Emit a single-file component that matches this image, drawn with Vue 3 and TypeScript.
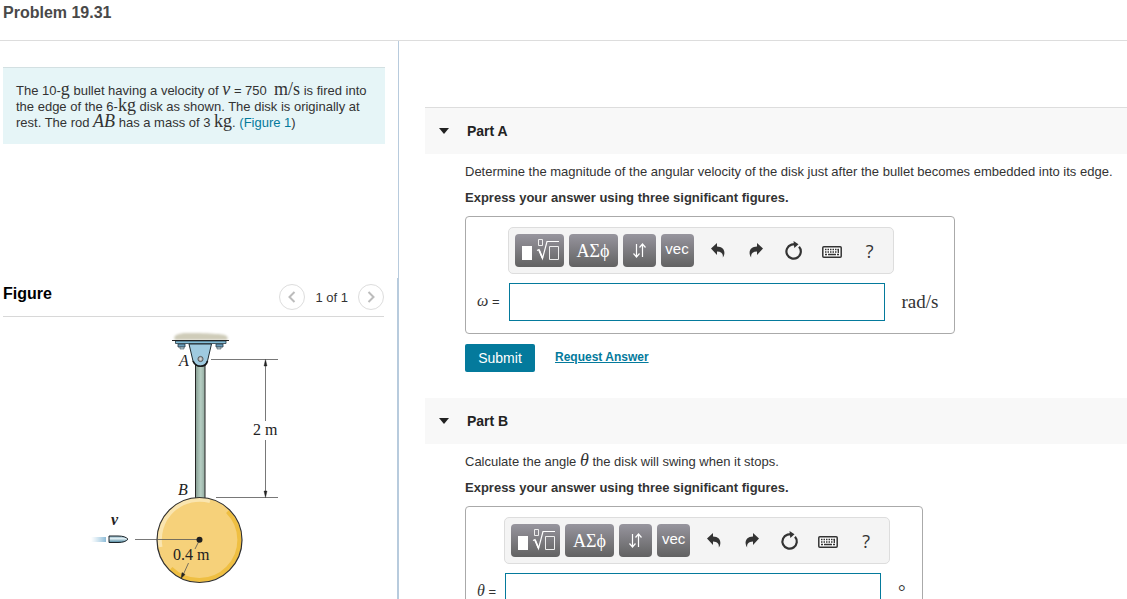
<script setup lang="ts">
import { ref } from 'vue'

interface Part {
  id: string
  title: string
  symbol: string
  unit: string
}

const parts: Part[] = [
  { id: 'a', title: 'Part A', symbol: 'ω', unit: 'rad/s' },
  { id: 'b', title: 'Part B', symbol: 'θ', unit: '°' },
]

const answers = ref<Record<string, string>>({ a: '', b: '' })
</script>

<template>
  <div class="page">
    <header class="top">
      <h1>Problem 19.31</h1>
    </header>
    <div class="columns">
      <aside class="side">
        <p class="statement">
          The 10-<span class="math">g</span> bullet having a velocity of <i class="math">v</i> = 750 &nbsp;<span class="math">m/s</span> is fired into
          the edge of the 6-<span class="math">kg</span> disk as shown. The disk is originally at
          rest. The rod <i class="math">AB</i> has a mass of 3 <span class="math">kg</span>. <a href="#figure">(Figure 1<span class="paren">)</span></a>
        </p>
        <section id="figure" class="figure">
          <div class="figure-head">
            <h2>Figure</h2>
            <nav class="pager" aria-label="Figures">
              <button type="button" aria-label="Previous figure">
                <svg width="10" height="14" viewBox="0 0 10 14"><path d="M7.5 2 2.5 7l5 5" /></svg>
              </button>
              <span>1 of 1</span>
              <button type="button" aria-label="Next figure">
                <svg width="10" height="14" viewBox="0 0 10 14"><path d="m2.5 2 5 5-5 5" /></svg>
              </button>
            </nav>
          </div>
          <svg class="drawing" width="381" height="282" viewBox="3 317 381 282" role="img" aria-label="Disk hanging from rod AB, struck by a bullet">
            <defs>
              <linearGradient id="rod" x1="0" x2="1" y1="0" y2="0">
                <stop offset="0" stop-color="#84998f" />
                <stop offset=".3" stop-color="#a1b9ae" />
                <stop offset=".55" stop-color="#b5cdc2" />
                <stop offset="1" stop-color="#91a99e" />
              </linearGradient>
              <linearGradient id="trail" x1="0" x2="1" y1="0" y2="0">
                <stop offset="0" stop-color="#a9cfe4" stop-opacity="0" />
                <stop offset="1" stop-color="#8dbcd8" />
              </linearGradient>
              <linearGradient id="shell" x1="0" x2="0" y1="0" y2="1">
                <stop offset="0" stop-color="#7fa9bb" />
                <stop offset=".4" stop-color="#e3f1f6" />
                <stop offset="1" stop-color="#427f99" />
              </linearGradient>
              <radialGradient id="pin">
                <stop offset="0" stop-color="#e2e2e2" />
                <stop offset="1" stop-color="#8f9396" />
              </radialGradient>
              <filter id="soft" x="-10%" y="-40%" width="120%" height="180%">
                <feGaussianBlur stdDeviation="1" />
              </filter>
            </defs>
            <path d="M175 340c-3-5 4-7 12-7 12 0 21 0 29 1 8 0 14 2 11 6z" fill="#cfccb9" filter="url(#soft)" />
            <path d="M178 344h7v3h-7zM216 344h7v3h-7z" fill="#6b9fbd" stroke="#263944" stroke-width=".8" />
            <path d="M180 347h4v2h-4zM217 347h4v2h-4z" fill="#b2cad5" stroke="#47545b" stroke-width=".6" />
            <path d="M175.500 341h50.500v2.500h-50.500z" fill="#83bdd8" stroke="#243943" stroke-width=".8" />
            <path d="M172 340.500h57" class="ink" />
            <path d="M195.500 362h9.500v137h-9.500z" fill="url(#rod)" stroke="#252525" />
            <path d="M189 344h22.500l-4 17c-2 7-12 7-14.500 0z" fill="#9fcae0" stroke="#202b30" />
            <path d="M193 361c3 7 12.500 7 14.500 0" fill="none" stroke="#17191b" stroke-width="1.700" />
            <circle cx="200.500" cy="359" r="2.600" fill="url(#pin)" stroke="#4c4c4c" stroke-width=".8" />
            <circle cx="199.500" cy="540" r="42.500" fill="#f6d17a" />
            <path d="M160.500 547A40 40 0 0 1 210 501" fill="none" stroke="#fae5af" stroke-width="4" />
            <path d="M227.500 511.500A40 40 0 0 1 171 568.500" fill="none" stroke="#efbf42" stroke-width="4" />
            <circle cx="199.500" cy="540" r="42.500" fill="none" stroke="#303030" stroke-width="1.200" />
            <path d="M135 539.500h64M211 359.500h67M216 497.500h62M265.500 365v56M265.500 440v52" class="thin" />
            <path d="m199 541-4 8M188.500 563l-5 11" class="thin" />
            <path d="M265.500 359.500 267 366h-3zM265.500 497.500 267 491h-3zM181 578.500l1-6 3 2z" fill="#222" stroke="#222" stroke-width=".4" />
            <circle cx="199.500" cy="539.800" r="3" fill="#1f1f1f" />
            <path d="M91 537h15v5H91z" fill="url(#trail)" />
            <path d="M109 536h9c5 0 8 1 10 3.200-2 2.300-5 3.300-10 3.300h-9z" fill="url(#shell)" stroke="#1c252a" />
            <text x="179" y="366" class="it">A</text>
            <text x="178" y="495" class="it">B</text>
            <text x="111" y="525" class="it bold">v</text>
            <text x="253" y="435">2 m</text>
            <text x="173" y="560">0.4 m</text>
          </svg>
        </section>
      </aside>

      <main class="main">
        <section v-for="part in parts" :key="part.id" class="part" :class="'part-' + part.id">
          <h2 class="part-head">
            <button type="button" aria-expanded="true"><span class="caret"></span>{{ part.title }}</button>
          </h2>
          <div class="part-body">
            <p v-if="part.id === 'a'">Determine the magnitude of the angular velocity of the disk just after the bullet becomes embedded into its edge.</p>
            <p v-else>Calculate the angle <i class="math">θ</i> the disk will swing when it stops.</p>
            <p class="strong">Express your answer using three significant figures.</p>
            <form class="answer" @submit.prevent>
              <div class="tools" role="toolbar" aria-label="Equation tools">
                <button type="button" class="key wide" aria-label="Templates">
                  <svg width="41" height="27" viewBox="0 0 41 27">
                    <path d="M3 9h10v14H3z" fill="#fff" />
                    <path d="M19.500 2.500h4v6h-4zM30.500 9.500h9v13h-9z" fill="none" stroke="#eee" />
                    <path d="M18 13.500l2-1 3.500 9 4.500-17H40" fill="none" stroke="#fff" stroke-width="1.200" />
                    <path d="m20 13 3.500 8" stroke="#fff" stroke-width="1.800" />
                  </svg>
                </button>
                <button type="button" class="key wide greek">ΑΣϕ</button>
                <button type="button" class="key" aria-label="Arrows">
                  <svg width="17" height="17" viewBox="0 0 17 17" fill="none" stroke="#fff" stroke-width="1.200">
                    <path d="M5.500 2v13M2.500 11.500l3 3.500 3-3.500M11.500 15V2M8.500 5.500l3-3.500 3 3.500" />
                  </svg>
                </button>
                <button type="button" class="key vec">vec</button>
                <button type="button" class="tool" aria-label="Undo">
                  <svg width="20" height="20" viewBox="0 0 20 20"><path d="M3 7.500 9 2v3.400c5 .2 8 2.800 7.300 7.600-.2 1.300-.8 2.600-1.500 3.600.5-3.800-1.300-6-5.800-6.100V14z" /></svg>
                </button>
                <button type="button" class="tool" aria-label="Redo">
                  <svg width="20" height="20" viewBox="0 0 20 20"><path d="M17 7.500 11 2v3.400c-5 .2-8 2.800-7.300 7.600.2 1.300.8 2.600 1.500 3.600-.5-3.800 1.300-6 5.800-6.100V14z" /></svg>
                </button>
                <button type="button" class="tool" aria-label="Reset">
                  <svg width="20" height="20" viewBox="0 0 20 20"><path d="M15 5.700a7.200 7.200 0 1 1-7.500-2.100L11 3.200" fill="none" stroke="#333" stroke-width="2.200" /><path d="M9.500 0 14.500 3.200 10.300 7z" /></svg>
                </button>
                <button type="button" class="tool" aria-label="Keyboard">
                  <svg width="20" height="20" viewBox="0 0 20 20">
                    <rect x=".8" y="5.800" width="18.400" height="10.400" rx="1" fill="#fff" stroke="#333" stroke-width="1.500" />
                    <path d="M3 8.500h14M3 11h12" fill="none" stroke="#333" stroke-width="1.400" stroke-dasharray="1.500 1" />
                    <path d="M3 13.500h2M6 13.500h8M15 13.500h2M16.300 8v4" fill="none" stroke="#333" stroke-width="1.300" />
                  </svg>
                </button>
                <button type="button" class="tool help" aria-label="Help">?</button>
              </div>
              <label :for="'answer-' + part.id"><i class="math">{{ part.symbol }}</i> =</label>
              <input :id="'answer-' + part.id" v-model="answers[part.id]" type="text" />
              <span class="unit math">{{ part.unit }}</span>
            </form>
            <div class="actions">
              <button type="button" class="submit">Submit</button>
              <a href="#request">Request Answer</a>
            </div>
          </div>
        </section>
      </main>
    </div>
  </div>
</template>

<style>
body {
  margin: 0;
  background: #fff;
}
</style>

<style scoped>
.page {
  display: flex;
  flex-direction: column;
  height: 100vh;
  overflow: hidden;
  color: #333;
  font: 13px/16px "Liberation Sans", Arial, sans-serif;
}
* {
  box-sizing: border-box;
}
h1, h2, p {
  margin: 0;
}
button {
  margin: 0;
  padding: 0;
  border: 0;
  background: none;
  color: inherit;
  font: inherit;
}
a {
  color: #047a9c;
}
.math {
  font-family: "Liberation Serif", "Times New Roman", serif;
  font-size: 18px;
  line-height: 0;
}
.top {
  flex: none;
  height: 41px;
  padding: 3px;
  border-bottom: 1px solid #ddd;
}
h1 {
  color: #494949;
  font-size: 16px;
  line-height: 20px;
}
.columns {
  display: grid;
  grid-template-columns: 399px 1fr;
  flex: 1;
  min-height: 0;
}
.side {
  padding: 26px 13px 0 3px;
  border-right: 1px solid #b8cbdd;
}
.statement {
  width: 382px;
  min-height: 77px;
  padding: 15px 12px 12px 13px;
  border-top: 1px solid #d3e0e2;
  background: #e6f5f7;
}
.statement a {
  text-decoration: none;
}
.statement .paren {
  color: #333;
}
.figure {
  margin-top: 134px;
  margin-right: -13px;
  border-right: 1px solid #b8cbdd;
}
.figure-head {
  display: flex;
  justify-content: space-between;
  width: 381px;
  height: 39px;
  padding-top: 6px;
  border-bottom: 1px solid #d8d8d8;
}
.figure h2 {
  color: #000;
  font-size: 16px;
  line-height: 20px;
}
.pager {
  display: flex;
  gap: 10px;
  line-height: 28px;
}
.pager button {
  display: grid;
  place-items: center;
  width: 26px;
  height: 26px;
  border: 1px solid #ddd;
  border-radius: 50%;
}
.pager path {
  fill: none;
  stroke: #bcbcbc;
  stroke-width: 2;
}
.drawing {
  display: block;
}
.drawing text {
  fill: #222;
  font: 16px "Liberation Serif", serif;
}
.drawing .it {
  font-style: italic;
}
.drawing .bold {
  font-weight: bold;
}
.ink {
  stroke: #222;
}
.thin {
  fill: none;
  stroke: #555;
  stroke-width: 0.8;
}
.main {
  min-width: 0;
  padding: 66px 0 0 26px;
}
.part + .part {
  margin-top: 26px;
}
.part-head {
  background: #f8f8f8;
}
.part-a .part-head {
  border-top: 1px solid #ddd;
}
.part-head button {
  display: flex;
  align-items: center;
  gap: 18px;
  height: 46px;
  padding-left: 14px;
  color: #222;
  font-size: 14px;
  font-weight: bold;
}
.caret {
  border: 5px solid transparent;
  border-top: 6px solid #222;
  border-bottom: 0;
}
.part-body {
  padding: 10px 0 0 40px;
}
.part-body p {
  margin-bottom: 10px;
}
.part-body .strong {
  font-weight: bold;
}
.answer {
  display: inline-grid;
  grid-template-columns: auto 376px auto;
  align-items: center;
  row-gap: 9px;
  padding: 10px 16px 12px 11px;
  border: 1px solid #aaa;
  border-radius: 4px;
  vertical-align: top;
}
.tools {
  display: flex;
  grid-column: 2 / 4;
  justify-self: start;
  margin-left: -1px;
  padding: 6px 4px 6px 6px;
  border: 1px solid #ddd;
  border-radius: 5px;
  background: #f4f4f4;
}
.key {
  display: grid;
  place-items: center;
  width: 33px;
  height: 33px;
  margin-right: 5px;
  border-radius: 4px;
  background: linear-gradient(#97959e, #626262);
  color: #fff;
}
.key.wide {
  width: 49px;
}
.key.greek {
  font-family: "Liberation Serif", serif;
  font-size: 18px;
}
.key.vec {
  padding-bottom: 3px;
  font-size: 15px;
}
.tool {
  display: grid;
  place-items: center;
  width: 38px;
  height: 33px;
  fill: #333;
}
.tool.help {
  font-family: "Open Sans", sans-serif;
  font-size: 18px;
}
label {
  padding-right: 9px;
}
label .math {
  font-size: 16px;
}
input {
  width: 100%;
  height: 38px;
  padding: 0 8px;
  border: 1px solid #047a9c;
  border-radius: 0;
  background: #fff;
  font: inherit;
  outline: 0;
}
.unit {
  padding-left: 17px;
  font-size: 19px;
}
.actions {
  display: flex;
  gap: 20px;
  margin-top: 10px;
}
.submit {
  width: 70px;
  height: 28px;
  border-radius: 2px;
  background: #047a9c;
  color: #fff;
  font-size: 14px;
}
.actions a {
  font-size: 12px;
  font-weight: bold;
  line-height: 26px;
}
</style>
